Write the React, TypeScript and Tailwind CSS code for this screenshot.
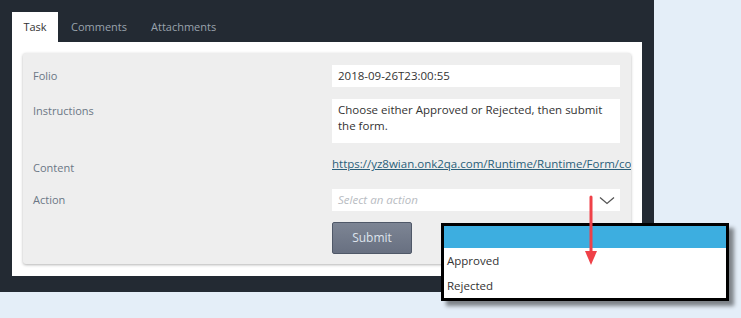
export default function App() {
  const font = { fontFamily: '"Open Sans", "Noto Sans", sans-serif' };
  return (
    <div className="relative w-[741px] h-[318px] bg-[#e4eef8] overflow-hidden text-[11px]" style={font}>
      <div className="w-[654px] h-[292px] bg-[#232a33] pl-3 pt-3">
        <div className="flex h-[30px] items-center">
          <div className="h-full w-[46px] bg-white text-[#333] flex items-center justify-center">Task</div>
          <div className="ml-[13px] text-[#9aa3ad]">Comments</div>
          <div className="ml-[24px] text-[#9aa3ad]">Attachments</div>
        </div>
        <div className="w-[630px] h-[234px] bg-white p-[11px]">
          <div className="h-[211px] bg-[#eeeeee] rounded-[3px] shadow-[0_1px_3px_rgba(0,0,0,0.3)] pt-3 pr-[11px] overflow-hidden">
            <div className="flex items-center h-[22px]">
              <div className="w-[309px] shrink-0 pl-[10px] text-[#6b7785]">Folio</div>
              <div className="flex-1 h-full bg-white flex items-center px-[6px] text-[#333] text-[11.5px]">2018-09-26T23:00:55</div>
            </div>
            <div className="flex mt-3 h-[44px]">
              <div className="w-[309px] shrink-0 pl-[10px] pt-[4px] text-[#6b7785]">Instructions</div>
              <div className="flex-1 h-full bg-white px-[6px] pt-[3px] leading-[16px] text-[#333] text-[11.5px]">
                Choose either Approved or Rejected, then submit the form.
              </div>
            </div>
            <div className="flex items-center mt-[9px] h-[30px]">
              <div className="w-[309px] shrink-0 pl-[10px] text-[#6b7785] pt-[2px]">Content</div>
              <div className="flex-1 min-w-0 whitespace-nowrap overflow-visible text-[#2a5f7a] underline -mt-[6px] text-[11.5px]">
                https://yz8wian.onk2qa.com/Runtime/Runtime/Form/content
              </div>
            </div>
            <div className="flex items-center mt-[7px] h-[22px]">
              <div className="w-[309px] shrink-0 pl-[10px] text-[#6b7785]">Action</div>
              <div className="flex-1 h-full bg-white flex items-center justify-between pl-[6px] pr-[5px]">
                <span className="italic text-[#b8bcc2] text-[11.5px]">Select an action</span>
                <svg width="16" height="9" viewBox="0 0 16 9">
                  <path d="M1 1.5 L8 7.5 L15 1.5" fill="none" stroke="#555" strokeWidth="1.3" />
                </svg>
              </div>
            </div>
            <div className="flex mt-[11px]">
              <div className="w-[309px] shrink-0" />
              <button className="w-[80px] h-[32px] rounded-[2px] border border-[#4f5868] bg-gradient-to-b from-[#7d8594] to-[#687081] text-[#dde3ec] text-[12px]">
                Submit
              </button>
            </div>
          </div>
        </div>
      </div>

      <div className="absolute left-[441px] top-[223px] w-[288px] h-[78px] border-[3px] border-black bg-white shadow-[5px_5px_4px_rgba(0,0,0,0.45)] text-[#333] text-[11.5px]">
        <div className="h-[22px] bg-[#3daee0]" />
        <div className="h-[26px] flex items-center pl-[3px]">Approved</div>
        <div className="h-[24px] flex items-center pl-[3px]">Rejected</div>
      </div>

      <svg className="absolute left-[583px] top-[195px]" width="16" height="72" viewBox="0 0 16 72">
        <line x1="8" y1="2" x2="8" y2="58" stroke="#ef4148" strokeWidth="3" strokeLinecap="round" />
        <polygon points="2,56 14,56 8,70" fill="#ef4148" />
      </svg>
    </div>
  );
}
